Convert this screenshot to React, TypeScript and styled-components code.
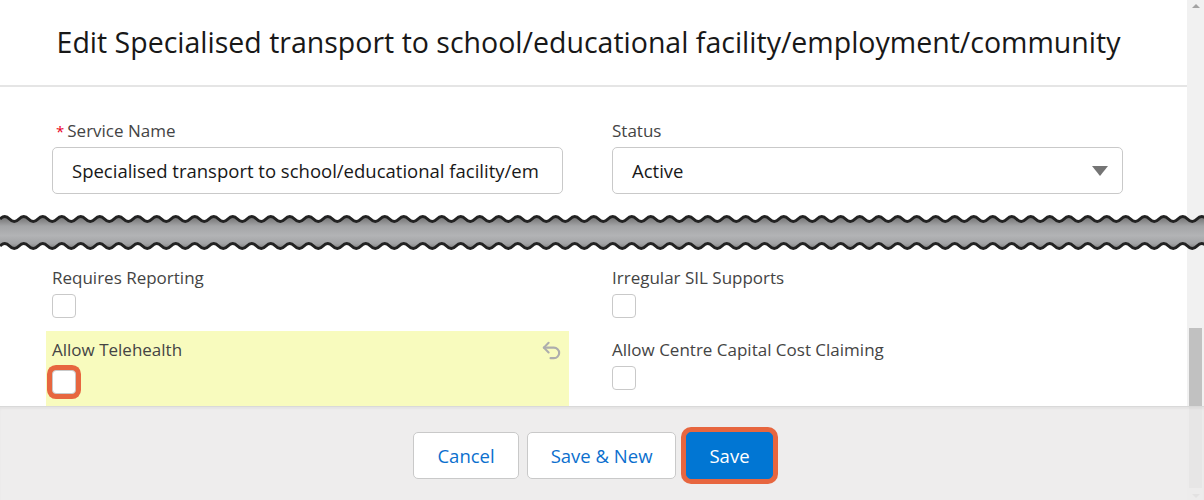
import React from 'react'
import styled, { createGlobalStyle } from 'styled-components'
import { Undo2 } from 'lucide-react'

const GlobalStyle = createGlobalStyle`
  html, body {
    margin: 0;
    padding: 0;
    background: #fff;
  }
  body {
    font-family: 'Open Sans', 'Noto Sans', Arial, sans-serif;
    color: #181818;
  }
`

const Frame = styled.div`
  width: 1204px;
  height: 500px;
  overflow: hidden;
  display: grid;
  grid-template-columns: 1fr 17px;
  grid-template-rows: auto auto auto 1fr auto;
  background: #fff;
`

const Header = styled.header`
  grid-column: 1;
  grid-row: 1;
  height: 85px;
  border-bottom: 2px solid #e5e5e5;
  display: flex;
  align-items: center;
  justify-content: center;
  padding-right: 10px;
`

const Title = styled.h1`
  margin: 0 0 2px;
  font-size: 28.5px;
  font-weight: 400;
  color: #181818;
`

const FormGrid = styled.section<{ row: number; top: number }>`
  grid-column: 1;
  grid-row: ${({ row }) => row};
  display: grid;
  grid-template-columns: 1fr 1fr;
  column-gap: 37px;
  align-content: start;
  padding: ${({ top }) => top}px 58px 0 46px;
`

const Field = styled.div<{ changed?: boolean; bottom?: number }>`
  display: flex;
  flex-direction: column;
  align-items: flex-start;
  padding: 9px 6px ${({ bottom }) => bottom ?? 13}px;
  background: ${({ changed }) => (changed ? '#f8fbbe' : 'transparent')};
  position: relative;
`

const Label = styled.label`
  font-size: 17px;
  line-height: 20px;
  color: #444;
  margin-bottom: 6px;
`

const Required = styled.abbr`
  color: #ea001e;
  text-decoration: none;
  margin: 0 3px 0 4px;
  font-size: 15px;
`

const TextBox = styled.div`
  box-sizing: border-box;
  width: 100%;
  height: 47px;
  border: 1px solid #c9c9c9;
  border-radius: 5px;
  padding: 0 19px;
  display: flex;
  align-items: center;
  justify-content: space-between;
  font-size: 18.5px;
  color: #181818;
  white-space: nowrap;
  overflow: hidden;
`

const Caret = styled.span`
  width: 0;
  height: 0;
  border-left: 8px solid transparent;
  border-right: 8px solid transparent;
  border-top: 10px solid #747474;
  margin-right: -5px;
`

const Checkbox = styled.span<{ focused?: boolean }>`
  box-sizing: border-box;
  display: block;
  width: 24px;
  height: 24px;
  border: 1px solid #c9c9c9;
  border-radius: 4px;
  background: #fff;
  margin-top: ${({ focused }) => (focused ? 4 : 0)}px;
  box-shadow: ${({ focused }) => (focused ? '0 0 0 5px #e7663f' : 'none')};
`

const UndoButton = styled.span`
  position: absolute;
  top: 8px;
  right: 6px;
  color: #adadad;
  display: flex;
`

const BreakBand = styled.div`
  grid-column: 1 / -1;
  grid-row: 3;
  height: 40px;
  z-index: 1;
  svg {
    display: block;
  }
`

const ScrollTrack = styled.div`
  grid-column: 2;
  grid-row: 1 / -1;
  background: #f1f1f1;
  display: flex;
  flex-direction: column;
  align-items: center;
  padding-top: 4px;
`

const ScrollArrow = styled.span<{ down?: boolean }>`
  width: 0;
  height: 0;
  border-left: 4px solid transparent;
  border-right: 4px solid transparent;
  ${({ down }) =>
    down ? 'border-top: 4px solid #a3a3a3;' : 'border-bottom: 4px solid #a3a3a3;'}
`

const ScrollThumb = styled.span`
  width: 13px;
  height: 160px;
  background: #c1c1c1;
  margin-top: 320px;
  margin-bottom: 6px;
`

const Footer = styled.footer`
  grid-column: 1 / -1;
  grid-row: 5;
  z-index: 2;
  height: 94px;
  box-sizing: border-box;
  border-top: 1px solid #d9d9d9;
  box-shadow: inset 0 2px 2px rgba(0, 0, 0, 0.04);
  background: rgba(236, 235, 234, 0.88);
  display: flex;
  justify-content: center;
  align-items: flex-start;
  gap: 8px;
  padding: 25px 18px 0 0;
`

const Button = styled.button<{ brand?: boolean }>`
  box-sizing: border-box;
  height: 47px;
  padding: 0 23px;
  border-radius: 5px;
  font-family: inherit;
  font-size: 18.5px;
  cursor: pointer;
  border: 1px solid ${({ brand }) => (brand ? '#0176d3' : '#c9c9c9')};
  background: ${({ brand }) => (brand ? '#0176d3' : '#fff')};
  color: ${({ brand }) => (brand ? '#fff' : '#0b6fce')};
  ${({ brand }) => brand && 'margin-left: 2px; padding: 0 22px; box-shadow: 0 0 0 5px #e7663f;'}
`

// torn-edge band: two wavy rules with a grey fill between them
const PERIOD = 19
const WAVES = 64
const TOP = 8
const BOTTOM = 35
const AMP = 5

const wave = (dir: 1 | -1) => {
  const half = (PERIOD / 2) * dir
  return `q${half / 2} ${-AMP * dir} ${half} 0` + ` t${half} 0`.repeat(WAVES * 2 - 1)
}

const width = PERIOD * WAVES
const topLine = `M0 ${TOP} ${wave(1)}`
const bottomLine = `M0 ${BOTTOM} ${wave(1)}`
const fillShape = `M0 ${TOP} ${wave(1)} L${width} ${BOTTOM} ${wave(-1)} Z`

const BreakLine: React.FC = () => (
  <svg width={1204} height={40} viewBox="0 0 1204 40">
    <defs>
      <linearGradient id="band" x1="0" y1="0" x2="0" y2="1">
        <stop offset="0" stopColor="#6f6f6f" />
        <stop offset="0.3" stopColor="#a4a5a7" />
        <stop offset="0.6" stopColor="#b2b3b5" />
        <stop offset="0.85" stopColor="#a2a3a5" />
        <stop offset="1" stopColor="#7e7e7e" />
      </linearGradient>
    </defs>
    <path d={fillShape} fill="url(#band)" />
    <path d={topLine} fill="none" stroke="#222" strokeWidth={3} />
    <path d={bottomLine} fill="none" stroke="#222" strokeWidth={3} />
  </svg>
)

const App: React.FC = () => {
  return (
    <>
      <GlobalStyle />
      <Frame>
        <Header>
          <Title>Edit Specialised transport to school/educational facility/employment/community</Title>
        </Header>

        <FormGrid row={2} top={25}>
          <Field bottom={17}>
            <Label>
              <Required title="required">*</Required>Service Name
            </Label>
            <TextBox>Specialised transport to school/educational facility/em</TextBox>
          </Field>
          <Field bottom={17}>
            <Label>Status</Label>
            <TextBox>
              Active
              <Caret />
            </TextBox>
          </Field>
        </FormGrid>

        <BreakBand>
          <BreakLine />
        </BreakBand>

        <FormGrid row={4} top={8}>
          <Field>
            <Label>Requires Reporting</Label>
            <Checkbox />
          </Field>
          <Field>
            <Label>Irregular SIL Supports</Label>
            <Checkbox />
          </Field>
          <Field changed bottom={12}>
            <Label>Allow Telehealth</Label>
            <UndoButton>
              <Undo2 size={23} strokeWidth={2.2} />
            </UndoButton>
            <Checkbox focused />
          </Field>
          <Field>
            <Label>Allow Centre Capital Cost Claiming</Label>
            <Checkbox />
          </Field>
        </FormGrid>

        <ScrollTrack>
          <ScrollArrow />
          <ScrollThumb />
          <ScrollArrow down />
        </ScrollTrack>

        <Footer>
          <Button>Cancel</Button>
          <Button>Save &amp; New</Button>
          <Button brand>Save</Button>
        </Footer>
      </Frame>
    </>
  )
}

export default App
